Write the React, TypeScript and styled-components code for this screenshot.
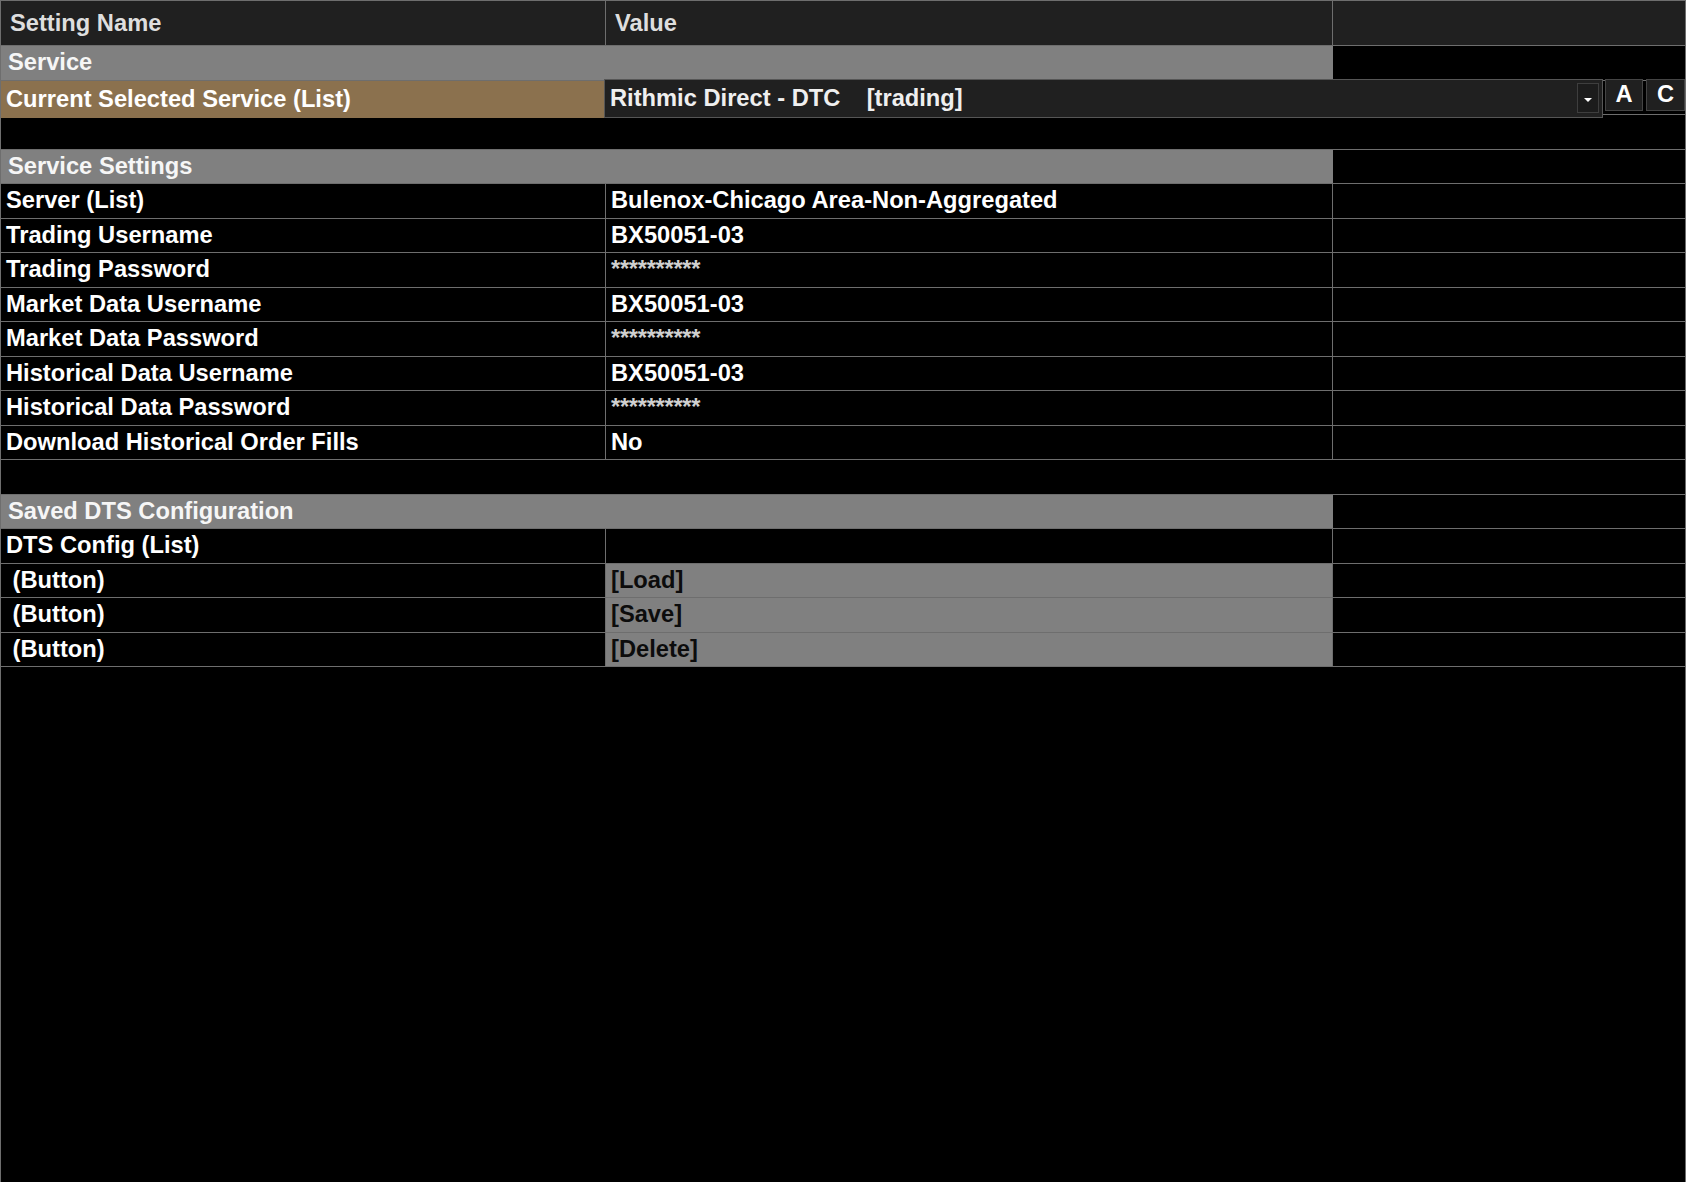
import React from 'react';
import styled, { createGlobalStyle } from 'styled-components';

type Item =
  | { kind: 'section'; label: string }
  | { kind: 'blank' }
  | { kind: 'field'; label: string; value?: string; secret?: boolean }
  | { kind: 'button'; label: string; value: string };

const settings: Item[] = [
  { kind: 'section', label: 'Service Settings' },
  { kind: 'field', label: 'Server (List)', value: 'Bulenox-Chicago Area-Non-Aggregated' },
  { kind: 'field', label: 'Trading Username', value: 'BX50051-03' },
  { kind: 'field', label: 'Trading Password', value: '**********', secret: true },
  { kind: 'field', label: 'Market Data Username', value: 'BX50051-03' },
  { kind: 'field', label: 'Market Data Password', value: '**********', secret: true },
  { kind: 'field', label: 'Historical Data Username', value: 'BX50051-03' },
  { kind: 'field', label: 'Historical Data Password', value: '**********', secret: true },
  { kind: 'field', label: 'Download Historical Order Fills', value: 'No' },
  { kind: 'blank' },
  { kind: 'section', label: 'Saved DTS Configuration' },
  { kind: 'field', label: 'DTS Config (List)' },
  { kind: 'button', label: ' (Button)', value: '[Load]' },
  { kind: 'button', label: ' (Button)', value: '[Save]' },
  { kind: 'button', label: ' (Button)', value: '[Delete]' },
];

const LINE = '#6e6e6e';
const COLS = '605px 727px 1fr';

const GlobalStyle = createGlobalStyle`
  html, body {
    margin: 0;
    padding: 0;
    background: #000;
  }
  body {
    font-family: "Liberation Sans", Arial, sans-serif;
  }
`;

const Panel = styled.div`
  box-sizing: border-box;
  width: 1686px;
  height: 1182px;
  background: #000;
  border: 1px solid ${LINE};
  border-bottom: none;
  font: bold 23.7px "Liberation Sans", Arial, sans-serif;
  color: #fff;
  overflow: hidden;
`;

const HeaderRow = styled.div`
  box-sizing: border-box;
  display: grid;
  grid-template-columns: ${COLS};
  height: 45px;
  background: #202020;
  border-bottom: 1px solid ${LINE};
`;

const HeaderCell = styled.div`
  display: flex;
  align-items: center;
  padding-left: 9px;
  color: #dedede;
  border-right: 1px solid ${LINE};

  &:last-child {
    border-right: none;
  }
`;

const Row = styled.div`
  box-sizing: border-box;
  display: grid;
  grid-template-columns: ${COLS};
  height: 34.5px;
  border-bottom: 1px solid ${LINE};
`;

const Cell = styled.div<{ $tone?: 'plain' | 'button' | 'selected' }>`
  display: flex;
  align-items: center;
  padding-left: 5px;
  white-space: pre;
  overflow: hidden;
  border-right: 1px solid ${LINE};
  background: ${(p) =>
    p.$tone === 'button' ? '#808080' : p.$tone === 'selected' ? '#8b714e' : '#000'};
  color: ${(p) => (p.$tone === 'button' ? '#0c0c0c' : '#fff')};

  &:last-child {
    border-right: none;
  }
`;

const Secret = styled.span`
  color: #cfcfcf;
  letter-spacing: -0.3px;
`;

const SectionCell = styled.div`
  grid-column: 1 / 3;
  display: flex;
  align-items: center;
  padding-left: 7px;
  background: #808080;
  color: #f6f6f6;
`;

const BlankCell = styled.div`
  grid-column: 1 / 4;
`;

const EditorCell = styled.div`
  grid-column: 2 / 4;
  display: flex;
  align-items: flex-start;
  margin-left: -2px;
  position: relative;
  z-index: 1;
`;

const Combo = styled.div`
  box-sizing: border-box;
  display: flex;
  align-items: center;
  width: 999px;
  height: 39px;
  margin-top: -2px;
  padding: 0 3px 0 5px;
  background: #202020;
  border: 1px solid #565656;
  color: #efefef;
  white-space: pre;
`;

const ComboText = styled.span`
  flex: 1;
`;

const DropButton = styled.div`
  box-sizing: border-box;
  display: flex;
  justify-content: center;
  width: 22px;
  height: 30px;
  padding-top: 14px;
  background: #1c1c1c;
  border: 1px solid #3e3e3e;
`;

const SideButton = styled.div<{ $w: number; $gap: number }>`
  box-sizing: border-box;
  display: flex;
  align-items: center;
  justify-content: center;
  width: ${(p) => p.$w}px;
  height: 32px;
  margin-top: -2px;
  margin-left: ${(p) => p.$gap}px;
  background: #202020;
  border: 1px solid #444;
  color: #fff;
`;

function SettingRow({ item }: { item: Item }) {
  if (item.kind === 'blank') {
    return (
      <Row>
        <BlankCell />
      </Row>
    );
  }
  if (item.kind === 'section') {
    return (
      <Row>
        <SectionCell>{item.label}</SectionCell>
        <Cell />
      </Row>
    );
  }
  const secret = item.kind === 'field' && item.secret;
  return (
    <Row>
      <Cell>{item.label}</Cell>
      <Cell $tone={item.kind === 'button' ? 'button' : 'plain'}>
        {secret ? <Secret>{item.value}</Secret> : item.value}
      </Cell>
      <Cell />
    </Row>
  );
}

export default function App() {
  return (
    <>
      <GlobalStyle />
      <Panel>
        <HeaderRow>
          <HeaderCell>Setting Name</HeaderCell>
          <HeaderCell>Value</HeaderCell>
          <HeaderCell />
        </HeaderRow>

        <Row>
          <SectionCell>Service</SectionCell>
          <Cell />
        </Row>
        <Row>
          <Cell $tone="selected">Current Selected Service (List)</Cell>
          <EditorCell>
            <Combo>
              <ComboText>{'Rithmic Direct - DTC    [trading]'}</ComboText>
              <DropButton>
                <svg width="8" height="4" viewBox="0 0 8 4">
                  <path d="M0 0h8L4 4z" fill="#fff" />
                </svg>
              </DropButton>
            </Combo>
            <SideButton $w={38} $gap={2}>A</SideButton>
            <SideButton $w={39} $gap={3}>C</SideButton>
          </EditorCell>
        </Row>
        <Row>
          <BlankCell />
        </Row>

        {settings.map((item, i) => (
          <SettingRow item={item} key={i} />
        ))}
      </Panel>
    </>
  );
}
